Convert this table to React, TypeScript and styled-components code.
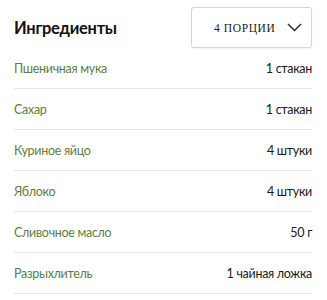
import React from "react";
import styled, { createGlobalStyle } from "styled-components";

const GlobalStyle = createGlobalStyle`
    body {
        margin: 0;
        background: #ffffff;
        font-family: Lato, Roboto, sans-serif;
    }
`;

const Wrapper = styled.div`
    padding: 7px 15px 0 14px;
`;

const Header = styled.div`
    display: flex;
    justify-content: space-between;
    align-items: center;
`;

const Title = styled.h2`
    margin: 0;
    font-size: 16.5px;
    font-weight: 700;
    letter-spacing: -0.3px;
    color: #111111;
`;

const PortionSelect = styled.button`
    width: 121px;
    height: 41px;
    display: flex;
    align-items: center;
    justify-content: space-between;
    padding: 0 9px 0 22px;
    background: #ffffff;
    border: 1px solid #d4d4d4;
    border-radius: 3px;
    box-shadow: 0 1px 2px rgba(0, 0, 0, 0.06);
`;

const PortionText = styled.span`
    font-family: "Liberation Serif", serif;
    font-size: 11.5px;
    letter-spacing: 0.6px;
    color: #222222;
`;

const List = styled.ul`
    list-style: none;
    margin: 0;
    padding: 0;
`;

const Row = styled.li`
    display: flex;
    justify-content: space-between;
    align-items: center;
    height: 40px;
    border-bottom: 1px solid #e6e6e6;
    font-size: 12.5px;
    letter-spacing: -0.3px;
`;

const Name = styled.span`
    color: #5e7d43;
`;

const Amount = styled.span`
    color: #1a1a1a;
`;

const ingredients = [
    ["Пшеничная мука", "1 стакан"],
    ["Сахар", "1 стакан"],
    ["Куриное яйцо", "4 штуки"],
    ["Яблоко", "4 штуки"],
    ["Сливочное масло", "50 г"],
    ["Разрыхлитель", "1 чайная ложка"],
];

function App() {
    return (
        <>
            <GlobalStyle />
            <Wrapper>
                <Header>
                    <Title>Ингредиенты</Title>
                    <PortionSelect>
                        <PortionText>4 ПОРЦИИ</PortionText>
                        <svg width="15" height="9" viewBox="0 0 15 9" fill="none">
                            <path d="M1 1l6.5 6.5L14 1" stroke="#222" strokeWidth="1.4" />
                        </svg>
                    </PortionSelect>
                </Header>
                <List>
                    {ingredients.map(([name, amount]) => (
                        <Row key={name}>
                            <Name>{name}</Name>
                            <Amount>{amount}</Amount>
                        </Row>
                    ))}
                </List>
            </Wrapper>
        </>
    );
}

export default App;
